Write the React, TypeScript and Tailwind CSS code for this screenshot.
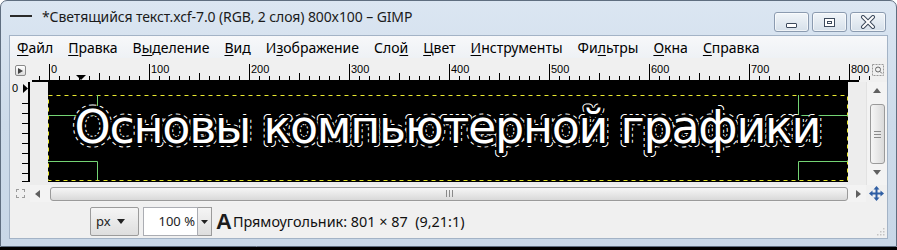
const menu: [string, string, string][] = [
  ["", "Ф", "айл"],
  ["", "П", "равка"],
  ["В", "ы", "деление"],
  ["", "В", "ид"],
  ["И", "з", "ображение"],
  ["Сло", "й", ""],
  ["", "Ц", "вет"],
  ["", "И", "нструменты"],
  ["Фи", "л", "ьтры"],
  ["", "О", "кна"],
  ["", "С", "правка"],
];

const HRuler = () => {
  const ticks = [];
  for (let k = -1; k <= 82; k++) {
    const x = 19.5 + k * 10;
    const h = k % 10 === 0 ? 16 : k % 5 === 0 ? 7 : 4;
    ticks.push(<line key={k} x1={x} x2={x} y1={22 - h} y2={22} stroke="#000" strokeWidth="1" />);
  }
  const labels = [];
  for (let k = 0; k <= 8; k++) {
    labels.push(
      <text key={k} x={21 + k * 100} y={15} fontSize="11" fontFamily="'Liberation Sans', Arial, sans-serif" fill="#000">
        {k * 100}
      </text>
    );
  }
  return (
    <svg width="841" height="24" className="block">
      {ticks}
      {labels}
      <rect x="2" y="22" width="827" height="2" fill="#000" />
      <polygon points="46,17 56,17 51,22" fill="#000" />
    </svg>
  );
};

const VRuler = () => {
  const ticks = [];
  for (let k = 2; k <= 9; k++) {
    const y = 1.5 + k * 10;
    ticks.push(<line key={k} x1={12} x2={19} y1={y} y2={y} stroke="#000" strokeWidth="1" />);
  }
  return (
    <svg width="20" height="103" className="block">
      <text x="2" y="10" fontSize="11" fontFamily="'Liberation Sans', Arial, sans-serif" fill="#000">0</text>
      <polygon points="13,2 13,11 18,6.5" fill="#000" />
      {ticks}
      <line x1="12" x2="19" y1="99.5" y2="99.5" stroke="#000" />
      <rect x="18" y="0" width="2" height="100" fill="#000" />
    </svg>
  );
};

const Artwork = () => {
  const textProps = {
    x: 400,
    y: 61,
    textAnchor: "middle" as const,
    fontSize: 46,
    fontFamily: "'DejaVu Sans', Verdana, sans-serif",
    textLength: 747,
    lengthAdjust: "spacing" as const,
  };
  const green = "#74d474";
  return (
    <svg width="800" height="100" className="block bg-black" style={{ WebkitFontSmoothing: "antialiased" }}>
      <rect x="0.5" y="13.5" width="799" height="85" fill="none" stroke="#e8e830" strokeDasharray="4 4" />
      <path d={`M49.5 13 V33.5 H0 M49.5 98 V79.5 H0 M750.5 13 V33.5 H800 M750.5 98 V79.5 H800`} fill="none" stroke={green} />
      <text {...textProps} fill="none" stroke="#fff" strokeWidth="8" strokeDasharray="3 3" strokeLinejoin="round">
        Основы компьютерной графики
      </text>
      <text {...textProps} fill="#000" stroke="#000" strokeWidth="6" strokeLinejoin="round">
        Основы компьютерной графики
      </text>
      <text {...textProps} fill="#fff">
        Основы компьютерной графики
      </text>
    </svg>
  );
};

const WinButton = ({ children, w = 35 }: { children: React.ReactNode; w?: number }) => (
  <div
    className="h-[20px] flex items-center justify-center rounded-[3px] border border-[#8b9bb0] bg-gradient-to-b from-[#f1f5f9] to-[#d6e0ea] shadow-[inset_0_0_0_1px_rgba(255,255,255,0.6)]"
    style={{ width: w }}
  >
    {children}
  </div>
);

export default function App() {
  return (
    <div className="w-[897px] h-[250px] overflow-hidden bg-white flex flex-col" style={{ fontFamily: "'Noto Sans', 'Open Sans', sans-serif" }}>
      <div className="h-[247px] rounded-t-[7px] border border-[#5f6e80] bg-gradient-to-b from-[#dbe6f2] via-[#cddbea] to-[#c8d7e7] flex flex-col">
        {/* Title bar */}
        <div className="h-[34px] flex items-start">
          <div className="flex items-center h-[30px] pl-[9px]">
            <div className="w-[22px] h-[2px] bg-[#2a2a2a]" />
            <span className="ml-[10px] text-[14px] text-[#1b1b1b] tracking-[-0.1px]">
              *Светящийся текст.xcf-7.0 (RGB, 2 слоя) 800x100 – GIMP
            </span>
          </div>
          <div className="ml-auto mt-[11px] mr-[10px] flex gap-[3px]">
            <WinButton>
              <div className="w-[11px] h-[5px] mt-[6px] rounded-[1px] border border-[#3d4a5c] bg-white" />
            </WinButton>
            <WinButton>
              <div className="w-[11px] h-[9px] border border-[#3d4a5c] bg-white flex items-center justify-center">
                <div className="w-[5px] h-[3px] border border-[#3d4a5c]" />
              </div>
            </WinButton>
            <WinButton w={36}>
              <svg width="16" height="14" viewBox="0 0 16 14">
                <path d="M3 2 L13 12 M13 2 L3 12" stroke="#3d4a5c" strokeWidth="4" strokeLinecap="round" />
                <path d="M3 2 L13 12 M13 2 L3 12" stroke="#fff" strokeWidth="2" strokeLinecap="round" />
              </svg>
            </WinButton>
          </div>
        </div>

        {/* Client area */}
        <div className="mx-[8px] border border-[#a3b3c6] bg-[#f0f0f0] flex flex-col">
          {/* Menu bar */}
          <div className="h-[22px] bg-gradient-to-b from-[#f7f8fa] to-[#eef1f5] flex items-center gap-[1px] text-[14px] text-black">
            {menu.map(([a, u, b]) => (
              <span key={a + u + b} className="px-[7px]">
                {a}
                <span className="underline underline-offset-[2px]">{u}</span>
                {b}
              </span>
            ))}
          </div>

          {/* Ruler row */}
          <div className="h-[24px] flex">
            <div className="w-[20px] flex items-center justify-center">
              <div className="w-[11px] h-[11px] mt-[1px] border border-[#8a8a8a] rounded-[2px] bg-gradient-to-b from-white to-[#dcdcdc] flex items-center justify-center">
                <svg width="5" height="6"><polygon points="0,0 5,3 0,6" fill="#444" /></svg>
              </div>
            </div>
            <div className="w-[836px] overflow-visible">
              <HRuler />
            </div>
            <div className="flex-1 flex items-center justify-end pr-[3px]">
              <svg width="12" height="12">
                <rect x="0.5" y="0.5" width="11" height="11" fill="none" stroke="#9a9a9a" strokeDasharray="2 1" />
                <circle cx="6" cy="5.5" r="2.5" fill="none" stroke="#666" />
                <line x1="7.8" y1="7.3" x2="10" y2="9.5" stroke="#666" />
              </svg>
            </div>
          </div>

          {/* Canvas row */}
          <div className="h-[103px] flex">
            <div className="w-[20px]">
              <VRuler />
            </div>
            <div className="w-[836px] bg-[#ededed] pl-[18px]">
              <Artwork />
            </div>
            <div className="flex-1 flex flex-col items-center bg-[#f3f3f3] border-l border-[#e2e2e2]">
              <svg width="8" height="5" className="mt-[6px]"><polygon points="0,5 8,5 4,0" fill="#606060" /></svg>
              <div className="mt-[11px] w-[15px] h-[60px] rounded-[3px] border border-[#9a9a9a] bg-gradient-to-r from-[#f6f6f6] to-[#dadada] flex flex-col items-center justify-center gap-[2px]">
                <div className="w-[7px] h-[1px] bg-[#8a8a8a]" />
                <div className="w-[7px] h-[1px] bg-[#8a8a8a]" />
                <div className="w-[7px] h-[1px] bg-[#8a8a8a]" />
              </div>
              <svg width="8" height="5" className="mt-[6px]"><polygon points="0,0 8,0 4,5" fill="#606060" /></svg>
            </div>
          </div>

          {/* Horizontal scrollbar row */}
          <div className="h-[17px] flex items-center">
            <div className="w-[20px] flex justify-center">
              <div className="w-[9px] h-[9px] border border-dashed border-[#9c9c9c]" />
            </div>
            <div className="w-[836px] h-[17px] flex items-center bg-[#f3f3f3]">
              <svg width="5" height="8" className="ml-[5px]"><polygon points="5,0 5,8 0,4" fill="#606060" /></svg>
              <div className="ml-[10px] w-[798px] h-[14px] rounded-[3px] border border-[#9a9a9a] bg-gradient-to-b from-[#f6f6f6] to-[#d9d9d9] flex items-center justify-center gap-[2px]">
                <div className="w-[1px] h-[7px] bg-[#8a8a8a]" />
                <div className="w-[1px] h-[7px] bg-[#8a8a8a]" />
                <div className="w-[1px] h-[7px] bg-[#8a8a8a]" />
              </div>
              <svg width="5" height="8" className="ml-[8px]"><polygon points="0,0 0,8 5,4" fill="#606060" /></svg>
            </div>
            <div className="flex-1 flex justify-center">
              <svg width="15" height="15" viewBox="0 0 15 15">
                <path d="M7.5 2.5 V12.5 M2.5 7.5 H12.5" stroke="#2f5ea3" strokeWidth="2" />
                <polygon points="7.5,0 4.5,3.5 10.5,3.5" fill="#2f5ea3" />
                <polygon points="7.5,15 4.5,11.5 10.5,11.5" fill="#2f5ea3" />
                <polygon points="0,7.5 3.5,4.5 3.5,10.5" fill="#2f5ea3" />
                <polygon points="15,7.5 11.5,4.5 11.5,10.5" fill="#2f5ea3" />
              </svg>
            </div>
          </div>

          {/* Status bar */}
          <div className="h-[36px] flex items-start pt-[5px] pl-[80px] relative">
            <div className="w-[49px] h-[29px] border border-[#9b9b9b] rounded-[2px] bg-gradient-to-b from-[#f5f5f5] to-[#dedede] flex items-center pl-[5px] gap-[6px] text-[13px] text-[#222]">
              <span>px</span>
              <svg width="8" height="5"><polygon points="0,0 8,0 4,5" fill="#222" /></svg>
            </div>
            <div className="ml-[4px] w-[55px] h-[29px] border border-[#abadb3] bg-white flex items-center justify-end pr-[2px] text-[13px] text-[#222]">
              100 %
            </div>
            <div className="w-[14px] h-[29px] border border-l-0 border-[#9b9b9b] bg-gradient-to-b from-[#f5f5f5] to-[#dedede] flex items-center justify-center">
              <svg width="7" height="4"><polygon points="0,0 7,0 3.5,4" fill="#222" /></svg>
            </div>
            <div className="ml-[4px] h-[29px] flex items-center">
              <span className="text-[22px] leading-none font-black text-[#1c1c1c]" style={{ fontFamily: "'Liberation Sans', Arial, sans-serif" }}>
                A
              </span>
              <span className="ml-[1px] text-[14.4px] text-[#111] whitespace-pre">Прямоугольник: 801 × 87  (9,21:1)</span>
            </div>
            <svg width="8" height="8" className="absolute right-[2px] bottom-[2px]">
              <rect x="6" y="0" width="1.5" height="1.5" fill="#c4c4c4" />
              <rect x="3" y="3" width="1.5" height="1.5" fill="#c4c4c4" />
              <rect x="6" y="3" width="1.5" height="1.5" fill="#c4c4c4" />
              <rect x="0" y="6" width="1.5" height="1.5" fill="#c4c4c4" />
              <rect x="3" y="6" width="1.5" height="1.5" fill="#c4c4c4" />
              <rect x="6" y="6" width="1.5" height="1.5" fill="#c4c4c4" />
            </svg>
          </div>
        </div>
      </div>
      <div className="h-[3px] bg-black" />
    </div>
  );
}
